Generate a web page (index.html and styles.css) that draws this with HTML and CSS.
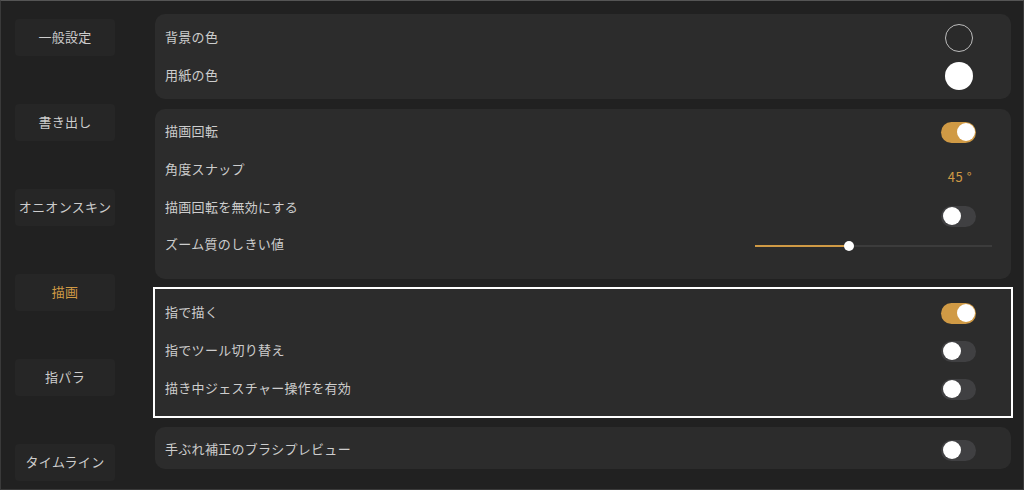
FILE: index.html
```html
<!DOCTYPE html>
<html lang="ja">
<head>
<meta charset="utf-8">
<link rel="stylesheet" href="styles.css">
</head>
<body>
<div class="app">
  <nav class="sidebar">
    <div class="nav-btn">一般設定</div>
    <div class="nav-btn">書き出し</div>
    <div class="nav-btn">オニオンスキン</div>
    <div class="nav-btn active">描画</div>
    <div class="nav-btn">指パラ</div>
    <div class="nav-btn">タイムライン</div>
  </nav>
  <main class="content">
    <section class="panel p1">
      <div class="row"><span class="label">背景の色</span><span class="swatch dark"></span></div>
      <div class="row"><span class="label">用紙の色</span><span class="swatch light"></span></div>
    </section>
    <section class="panel p2">
      <div class="row"><span class="label">描画回転</span><span class="toggle on"><span class="knob"></span></span></div>
      <div class="row"><span class="label">角度スナップ</span><span class="value low">45 °</span></div>
      <div class="row"><span class="label">描画回転を無効にする</span><span class="toggle low2"><span class="knob"></span></span></div>
      <div class="row short"><span class="label">ズーム質のしきい値</span>
        <span class="slider"><span class="fill" style="width: 94px"></span><span class="thumb" style="left: 94px"></span></span>
      </div>
    </section>
    <section class="panel p3 highlight">
      <div class="row"><span class="label">指で描く</span><span class="toggle on"><span class="knob"></span></span></div>
      <div class="row"><span class="label">指でツール切り替え</span><span class="toggle"><span class="knob"></span></span></div>
      <div class="row"><span class="label">描き中ジェスチャー操作を有効</span><span class="toggle"><span class="knob"></span></span></div>
    </section>
    <section class="panel p4">
      <div class="row"><span class="label">手ぶれ補正のブラシプレビュー</span><span class="toggle"><span class="knob"></span></span></div>
    </section>
  </main>
</div>
</body>
</html>
```

FILE: styles.css
```css
* { box-sizing: border-box; }
html, body { margin: 0; padding: 0; background: #212121; }
body {
  font-family: "Noto Sans CJK JP", "Noto Sans", sans-serif;
  font-size: 13px;
  line-height: 1;
  color: #cdcdcd;
}
.app {
  width: 1024px;
  height: 490px;
  background: #212121;
  border: 1px solid #3a3a3a;
  border-top-color: #555555;
  display: flex;
  overflow: hidden;
}
.sidebar {
  width: 154px;
  flex: none;
  padding: 18px 0 0 14px;
  display: flex;
  flex-direction: column;
  gap: 48px;
}
.nav-btn {
  width: 100px;
  height: 37px;
  background: #262626;
  border-radius: 4px;
  display: flex;
  align-items: center;
  justify-content: center;
  color: #cdcdcd;
  letter-spacing: 0.3px;
  padding-bottom: 3px;
}
.nav-btn.active { color: #d09a45; }
.content {
  flex: 1;
  padding: 13px 12px 0 0;
  display: flex;
  flex-direction: column;
  gap: 10px;
}
.panel {
  width: 856px;
  background: #2c2c2c;
  border-radius: 10px;
  display: flex;
  flex-direction: column;
}
.p1 { padding: 5px 0 4px; }
.p2 { padding: 4px 0 16px; }
.p3 { padding: 5px 0 8px; }
.p4 { padding: 4px 0 0; height: 42px; margin-top: 1px; }
.highlight {
  border-radius: 0;
  outline: 2px solid #ffffff;
}
.row {
  height: 38px;
  display: flex;
  align-items: center;
  justify-content: space-between;
  padding: 0 19px 0 10px;
}
.row.short { height: 36px; }
.label { letter-spacing: 0.3px; margin-bottom: 3px; }
.swatch {
  width: 28px;
  height: 28px;
  border-radius: 50%;
  flex: none;
  margin-right: 19px;
}
.swatch.dark { border: 1px solid #bdbdbd; background: #2a2a2a; }
.swatch.light { background: #ffffff; }
.toggle {
  width: 35px;
  height: 21px;
  border-radius: 11px;
  background: #404042;
  flex: none;
  margin-right: 16px;
  padding: 1.5px;
  display: flex;
  justify-content: flex-start;
}
.toggle.on { background: #d09a45; justify-content: flex-end; }
.knob {
  width: 18px;
  height: 18px;
  border-radius: 50%;
  background: #ffffff;
}
.low2 { margin-top: 16px; }
.value {
  color: #d09a45;
  margin-right: 20px;
  letter-spacing: 0.5px;
}
.value.low { margin-top: 12px; }
.slider {
  position: relative;
  width: 237px;
  height: 2px;
  background: #3c3c3c;
  margin-top: 1px;
}
.fill {
  position: absolute;
  left: 0; top: 0;
  height: 2px;
  background: #d09a45;
}
.thumb {
  position: absolute;
  top: -4px;
  width: 10px;
  height: 10px;
  margin-left: -5px;
  border-radius: 50%;
  background: #ffffff;
}
```
